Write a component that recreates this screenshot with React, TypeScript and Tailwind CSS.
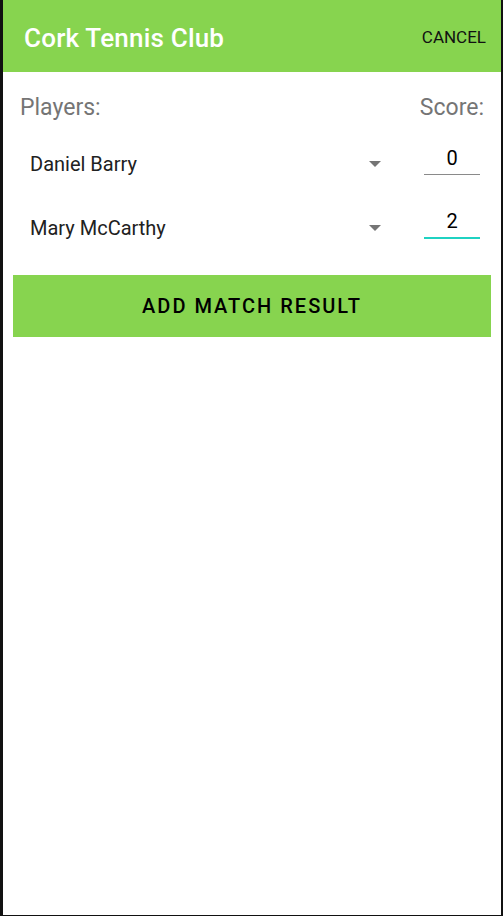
import React, { useState } from "react";

type Row = { name: string; score: string; focused: boolean };

const rows: Row[] = [
  { name: "Daniel Barry", score: "0", focused: false },
  { name: "Mary McCarthy", score: "2", focused: true },
];

const App = () => {
  const [scores, setScores] = useState(rows.map((r) => r.score));

  return (
    <main
      className="w-[503px] h-[916px] flex flex-col bg-white border-l-[3px] border-r-2 border-b border-[#111111] overflow-hidden"
      style={{ fontFamily: "Roboto, 'Noto Sans', sans-serif" }}
    >
      {/* ヘッダー */}
      <header className="h-[72px] bg-[#87d44f] flex items-center justify-between pl-[21px] pr-[15px] pt-[4px]">
        <h1 className="text-[26px] font-medium text-white tracking-[0.2px]">Cork Tennis Club</h1>
        <button className="text-[17px] text-[#111111]">CANCEL</button>
      </header>

      {/* ラベル */}
      <section className="flex justify-between pl-[17px] pr-[17px] pt-[19px] text-[23px] text-[#757575]">
        <span>Players:</span>
        <span>Score:</span>
      </section>

      {/* プレイヤー行 */}
      <section className="flex flex-col pl-[27px] pr-[21px] mt-[16px] gap-[20px]">
        {rows.map((row, i) => (
          <div key={row.name} className="h-[44px] flex items-center">
            <span className="flex-1 text-[20px] text-[#212121] pt-[1px]">{row.name}</span>
            <svg width="12" height="6" viewBox="0 0 12 6" className="mr-[43px]">
              <path d="M0 0 L12 0 L6 6 Z" fill="#757575" />
            </svg>
            <input
              value={scores[i]}
              onChange={(e) =>
                setScores(scores.map((s, j) => (j === i ? e.target.value : s)))
              }
              className={
                row.focused
                  ? "self-start w-[56px] h-[33px] text-center text-[20px] text-black outline-none border-b-2 border-[#1fd2c2]"
                  : "self-start w-[56px] h-[33px] text-center text-[20px] text-black outline-none border-b border-[#8a8a8a]"
              }
            />
          </div>
        ))}
      </section>

      {/* 追加ボタン */}
      <div className="px-[10px] mt-[25px]">
        <button className="w-full h-[62px] bg-[#87d44f] text-[20px] font-medium tracking-[2px] text-black">
          ADD MATCH RESULT
        </button>
      </div>
    </main>
  );
};

export default App;
